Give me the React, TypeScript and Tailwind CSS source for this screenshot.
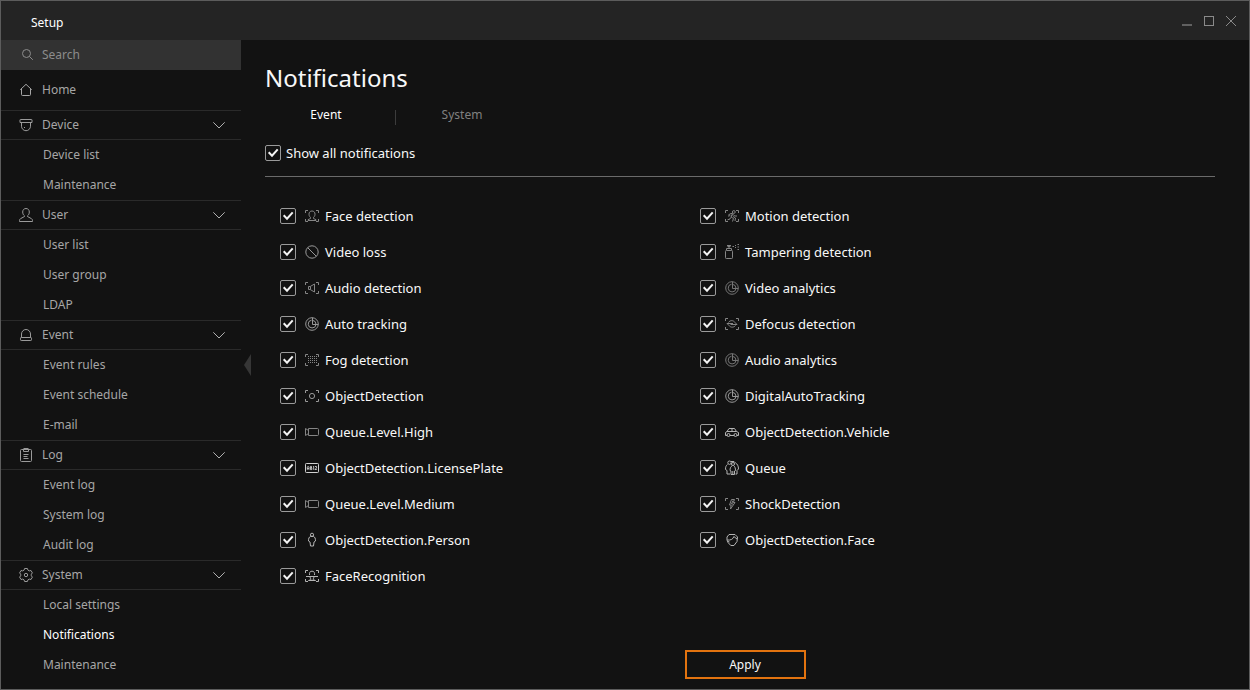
import { useState } from "react";
import type { ReactNode } from "react";

const corners = "M1.5 5V2.5H4M12 2.5h2.5V5M14.5 11v2.5H12M4 13.5H1.5V11";

const glyphs: Record<string, ReactNode> = {
  face: (
    <>
      <path d={corners} />
      <path d="M5 6.200C5 4.200 6.200 3 8 3s3 1.200 3 3.200c0 1.500-.6 2.500-1.500 3.200v1.100l2.500 1.200v.8H4v-.8l2.500-1.200V9.400C5.600 8.700 5 7.700 5 6.200Z" />
    </>
  ),
  motion: (
    <>
      <path d={corners} />
      <circle cx="9.800" cy="4" r="1.400" />
      <path d="M4 7.500 6.500 5.500h2L7 9l2.500 1.500-1 3M6.500 9.500l-.5 1.500-2.500.8M4.500 8.500l2-1.500M9.500 6.500l1 1.500h2.500M9 8.500l2.500 1.500-.5 3M8.500 6.500l-1 2" />
    </>
  ),
  blocked: (
    <>
      <circle cx="8" cy="8" r="6.200" />
      <path d="m3.700 3.700 8.600 8.600" />
    </>
  ),
  spray: (
    <>
      <rect x="1.500" y="6.500" width="7" height="8" rx=".8" />
      <path d="M2.500 6V4.500h5V6M5 4.500v-2M3 1.500h4M3.500 2.500h3" />
      <path d="M8.500 2.500h1.500M11 3.500h1M11 1.500h1M13.500 .5h1.500M13.500 3h1.500M13.500 5.500h1.500" />
    </>
  ),
  audio: (
    <>
      <path d={corners} />
      <path d="M4.500 6.500h1.700L10.500 4v8L6.200 9.500H4.500zM6.500 6.500v3" />
    </>
  ),
  radar: (
    <>
      <circle cx="8" cy="8" r="6.300" />
      <path d="M7.500 4.200A3.900 3.900 0 1 0 12 8.500M8.500 1.800v6.700h5.700M8.500 4.300a4 4 0 0 1 3.500 4" />
    </>
  ),
  defocus: (
    <>
      <path d={corners} />
      <path d="M3 7.500h6M4.500 6.500C6 4 9.500 4 11 6.500M6.500 8.500h6.500M5 9.500c1.500 2.200 5 2.200 6.500 0M11 6.500l2 2M3 7.500l2 2" />
    </>
  ),
  fog: (
    <>
      <path d={corners} />
      <path strokeDasharray="1 1" d="M4 4.500h9M4 6.500h9M4 8.500h9M4 10.500h9" />
    </>
  ),
  object: (
    <>
      <path d={corners} />
      <circle cx="8" cy="8" r="2.600" />
    </>
  ),
  camera: <path d="M4.500 4.500h9a1 1 0 0 1 1 1v5a1 1 0 0 1-1 1h-9zM4.500 6.500l-3-2v7l3-2" />,
  car: (
    <>
      <path d="M3 11.500H1.500v-3l1.500-1L5 4.500h5.500l2 3 2 1v3H13M6 11.500h4M3 7.500h9.500M8 4.500v3" />
      <circle cx="4.500" cy="11" r="1.500" />
      <circle cx="11.500" cy="11" r="1.500" />
    </>
  ),
  plate: (
    <>
      <rect x="1.500" y="3.500" width="13" height="9" rx=".8" />
      <path
        strokeWidth=".9"
        d="M3.300 9.800V7.200l.8-.9.8.9v2.600M3.300 8.500h1.600M6.400 6.400v3.200h1.400V8.100H6.400M6.400 6.400h1.100v1.600M9 6.900l.7-.5v3.400M11 6.500h1.500v1.400L11 9.500h1.800"
      />
    </>
  ),
  queue: (
    <>
      <circle cx="5.500" cy="2.700" r="1.700" />
      <path d="M3.500 4.500C2 5.500 1.500 7 1.500 9.500l1.500 1v3.500h3M7 1.500h3l1.500 1.500M11.500 3c1.800.8 3 3 3 6l-1.500 1.500V14h-1.500" />
      <circle cx="9" cy="4" r="1.500" />
      <path d="M8 5.800C6.500 6.800 6 8.500 6 10.500l1 .5v3.500h3.500V11l1-.5c0-2-.4-3.700-1.700-4.700M8.800 11v3" />
    </>
  ),
  shock: (
    <>
      <path d={corners} />
      <path d="M7.500 3.500h3L9.300 6.500h1.700l-4.500 6.500.7-4H5.500zM9 4.500 7.500 8h1.500" />
    </>
  ),
  person: (
    <>
      <circle cx="8" cy="2.800" r="1.600" />
      <path d="M6.500 4.500C5 5 4.500 6.500 4.500 9l1.500 1 .5 4h3l.5-4 1.500-1c0-2.500-.5-4-2-4.500z" />
    </>
  ),
  head: (
    <>
      <path d="M5 2.500h6l2.500 2.500-.5 4.500L10 13.500H6.800L4 10.500 3 8V5z" />
      <path d="M3.200 8C6.500 8.500 9.500 7 9.800 4.500l3.200 2.500M4 9.500l1.500.5" />
    </>
  ),
  recognition: (
    <>
      <path d={corners} />
      <path d="M5.500 7V5.500C5.500 4 6.500 3.200 8 3.200s2.500.8 2.500 2.300V7M2 8.500h12M6 9c.2 1 .5 1.500 1 2l-.3.800-2.200.7M10 9c-.2 1-.5 1.500-1 2l.3.800 2.200.7M4.500 12.500h7" />
    </>
  ),
  search: (
    <>
      <circle cx="7.500" cy="6.500" r="4" />
      <path d="m10.500 9.500 3.300 3.300" />
    </>
  ),
  home: <path d="M2.300 7.700 8 2.300l5.700 5.400M3.500 7v5.500a1 1 0 0 0 1 1h7a1 1 0 0 0 1-1V7" />,
  dome: (
    <>
      <path d="M2.500 2.500h11a.5.5 0 0 1 .5.5v2.500H2V3a.5.5 0 0 1 .5-.5ZM3.500 5.500v3.700a4.500 4.500 0 0 0 9 0V5.500" />
      <path d="M6 10.500h1" />
    </>
  ),
  user: (
    <path d="M6.500 8.800C5.300 8 4.700 6.700 4.700 5c0-2.100 1.300-3.500 3.300-3.500S11.300 2.900 11.300 5c0 1.700-.6 3-1.800 3.800v.7l4 2.200c.6.400 1 1 1 1.800v1h-13v-1c0-.8.4-1.400 1-1.800l4-2.200z" />
  ),
  alarm: (
    <path d="M3.500 10.500V7a4.500 4.500 0 0 1 9 0v3.500M3.200 10.500h9.600a.7.700 0 0 1 .7.700v1.600a.7.700 0 0 1-.7.700H3.200a.7.700 0 0 1-.7-.7v-1.600a.7.700 0 0 1 .7-.7Z" />
  ),
  clipboard: (
    <>
      <rect x="2.500" y="2.500" width="11" height="12" rx="1" />
      <path d="M5.500 2.500v2h5v-2M5.500 1.500h5M5.500 7.500h5M5.500 9.500h4M5.500 11.500h5" />
    </>
  ),
  gear: (
    <>
      <path d="M6.600 1.500h2.800l.5 1.600 1.400.8 1.700-.4 1.400 2.400L13.300 7.200v1.600l1.100 1.300-1.400 2.400-1.700-.4-1.400.8-.5 1.600H6.600l-.5-1.600-1.400-.8-1.700.4-1.400-2.400 1.100-1.300V7.200L1.600 5.900 3 3.500l1.700.4 1.400-.8z" />
      <circle cx="8" cy="8" r="1.700" />
    </>
  ),
};

function Glyph({ name, className }: { name: string; className: string }) {
  return (
    <svg
      viewBox="0 0 16 16"
      className={`size-4 shrink-0 ${className}`}
      fill="none"
      stroke="currentColor"
      strokeWidth="1"
      aria-hidden="true"
    >
      {glyphs[name]}
    </svg>
  );
}

const sections = [
  { title: "Device", icon: "dome", items: ["Device list", "Maintenance"] },
  { title: "User", icon: "user", items: ["User list", "User group", "LDAP"] },
  { title: "Event", icon: "alarm", items: ["Event rules", "Event schedule", "E-mail"] },
  { title: "Log", icon: "clipboard", items: ["Event log", "System log", "Audit log"] },
  { title: "System", icon: "gear", items: ["Local settings", "Notifications", "Maintenance"] },
];

const dim = "text-[#858585]";
const bright = "text-[#b4b4b4]";

const notifications = [
  { label: "Face detection", icon: "face", tone: dim },
  { label: "Motion detection", icon: "motion", tone: dim },
  { label: "Video loss", icon: "blocked", tone: "text-[#999999]" },
  { label: "Tampering detection", icon: "spray", tone: dim },
  { label: "Audio detection", icon: "audio", tone: dim },
  { label: "Video analytics", icon: "radar", tone: "text-[#757575]" },
  { label: "Auto tracking", icon: "radar", tone: "text-[#999999]" },
  { label: "Defocus detection", icon: "defocus", tone: dim },
  { label: "Fog detection", icon: "fog", tone: dim },
  { label: "Audio analytics", icon: "radar", tone: "text-[#757575]" },
  { label: "ObjectDetection", icon: "object", tone: "text-[#999999]" },
  { label: "DigitalAutoTracking", icon: "radar", tone: "text-[#999999]" },
  { label: "Queue.Level.High", icon: "camera", tone: dim },
  { label: "ObjectDetection.Vehicle", icon: "car", tone: bright },
  { label: "ObjectDetection.LicensePlate", icon: "plate", tone: "text-[#d0d0d0]" },
  { label: "Queue", icon: "queue", tone: bright },
  { label: "Queue.Level.Medium", icon: "camera", tone: dim },
  { label: "ShockDetection", icon: "shock", tone: dim },
  { label: "ObjectDetection.Person", icon: "person", tone: bright },
  { label: "ObjectDetection.Face", icon: "head", tone: bright },
  { label: "FaceRecognition", icon: "recognition", tone: bright },
];

function CheckRow({
  label,
  checked,
  onChange,
  children,
}: {
  label: string;
  checked: boolean;
  onChange: () => void;
  children?: ReactNode;
}) {
  return (
    <label className="flex items-center text-[13px] leading-5 text-[#f8f8f8]">
      <span className="grid size-4 shrink-0 place-items-center">
        <input
          type="checkbox"
          checked={checked}
          onChange={onChange}
          className="peer col-start-1 row-start-1 size-4 appearance-none rounded-xs border border-[#9a9a9a]"
        />
        <svg
          viewBox="0 0 16 16"
          className="pointer-events-none invisible col-start-1 row-start-1 size-4 peer-checked:visible"
          fill="none"
          stroke="#f4f4f4"
          strokeWidth="2"
          aria-hidden="true"
        >
          <path d="m3.700 7.300 3.300 3.400 5.700-6.400" />
        </svg>
      </span>
      {children}
      <span className="ml-[5px]">{label}</span>
    </label>
  );
}

function Sidebar() {
  return (
    <nav className="w-60 shrink-0 text-xs leading-5 text-[#a6a6a6]">
      <label className="flex h-[30px] items-center bg-[#323232] pl-[18px]">
        <Glyph name="search" className="text-[#8c8c8c]" />
        <input
          type="text"
          aria-label="Search"
          placeholder="Search"
          className="ml-[7px] min-w-0 flex-1 bg-transparent outline-none placeholder:text-[#8c8c8c]"
        />
      </label>
      <a href="#home" className="flex h-10 items-center pl-[17px]">
        <Glyph name="home" className="text-[#a6a6a6]" />
        <span className="ml-2">Home</span>
      </a>
      {sections.map((section) => (
        <div key={section.title}>
          <button
            type="button"
            className="flex h-[30px] w-full items-center border-y border-[#2a2a2a] pr-4 pl-[17px]"
          >
            <Glyph name={section.icon} className="text-[#9a9a9a]" />
            <span className="ml-2 flex-1 text-left">{section.title}</span>
            <svg
              viewBox="0 0 12 8"
              className="h-2 w-3"
              fill="none"
              stroke="#b0b0b0"
              strokeWidth="1"
              aria-hidden="true"
            >
              <path d="m.3 1.300 5.700 5.700 5.700-5.700" />
            </svg>
          </button>
          <ul>
            {section.items.map((item) => (
              <li key={item}>
                <a
                  href="#page"
                  className={
                    item === "Notifications"
                      ? "flex h-[30px] items-center pl-[42px] text-white"
                      : "flex h-[30px] items-center pl-[42px]"
                  }
                >
                  {item}
                </a>
              </li>
            ))}
          </ul>
        </div>
      ))}
    </nav>
  );
}

export default function App() {
  const [checks, setChecks] = useState<boolean[]>(notifications.map(() => true));
  const all = checks.every(Boolean);

  return (
    <div
      className="flex min-h-screen flex-col border border-[#5c5c5c] bg-[#121212]"
      style={{ fontFamily: '"Noto Sans", sans-serif' }}
    >
      <header className="flex h-[39px] items-center justify-between bg-[#242424] pr-3 pl-[30px]">
        <span className="pt-1 text-xs leading-5 text-white">Setup</span>
        <div className="flex gap-2.5 text-[#8a8a8a]">
          <button type="button" aria-label="Minimize">
            <svg viewBox="0 0 12 12" className="size-3" fill="none" stroke="currentColor">
              <path strokeWidth="2" strokeOpacity=".6" d="M1 10h10" />
            </svg>
          </button>
          <button type="button" aria-label="Maximize">
            <svg viewBox="0 0 12 12" className="size-3" fill="none" stroke="currentColor">
              <rect x="1.500" y="1.500" width="9" height="9" />
            </svg>
          </button>
          <button type="button" aria-label="Close">
            <svg viewBox="0 0 12 12" className="size-3" fill="none" stroke="currentColor">
              <path d="m1 1 10 10M11 1 1 11" />
            </svg>
          </button>
        </div>
      </header>

      <div className="flex flex-1">
        <Sidebar />
        <button type="button" aria-label="Collapse menu" className="w-2.5 shrink-0 self-center">
          <svg viewBox="0 0 10 24" className="h-6 w-2.5" aria-hidden="true">
            <path d="M10 1v22L3 12z" fill="#363636" />
          </svg>
        </button>

        <main className="flex flex-1 flex-col pr-[34px] pb-2.5 pl-[14px]">
          <h1 className="mt-5 text-2xl leading-9 text-[#f8f8f8]">Notifications</h1>
          <div role="tablist" className="mt-[9px] flex items-center text-xs leading-5">
            <button type="button" role="tab" aria-selected="true" className="w-[130px] pr-2 text-white">
              Event
            </button>
            <span className="mt-1 h-[15px] w-px bg-[#3c3c3c]" />
            <button type="button" role="tab" aria-selected="false" className="w-[132px] text-[#808080]">
              System
            </button>
          </div>
          <div className="mt-[18px] border-b border-[#6a6a6a] pb-[13px]">
            <CheckRow
              label="Show all notifications"
              checked={all}
              onChange={() => setChecks(checks.map(() => !all))}
            />
          </div>
          <div className="mt-[21px] grid grid-cols-2 pr-[95px] pl-[15px]">
            {notifications.map((n, i) => (
              <div key={n.label} className="flex h-9 items-center">
                <CheckRow
                  label={n.label}
                  checked={checks[i]}
                  onChange={() => setChecks(checks.map((c, j) => (j === i ? !c : c)))}
                >
                  <Glyph name={n.icon} className={`ml-2 ${n.tone}`} />
                </CheckRow>
              </div>
            ))}
          </div>
          <div className="mt-auto flex justify-center pt-6 pl-2.5">
            <button
              type="button"
              className="h-[29px] w-[121px] border-2 border-[#e2730f] text-xs leading-5 text-[#f8f8f8]"
            >
              Apply
            </button>
          </div>
        </main>
      </div>
    </div>
  );
}
